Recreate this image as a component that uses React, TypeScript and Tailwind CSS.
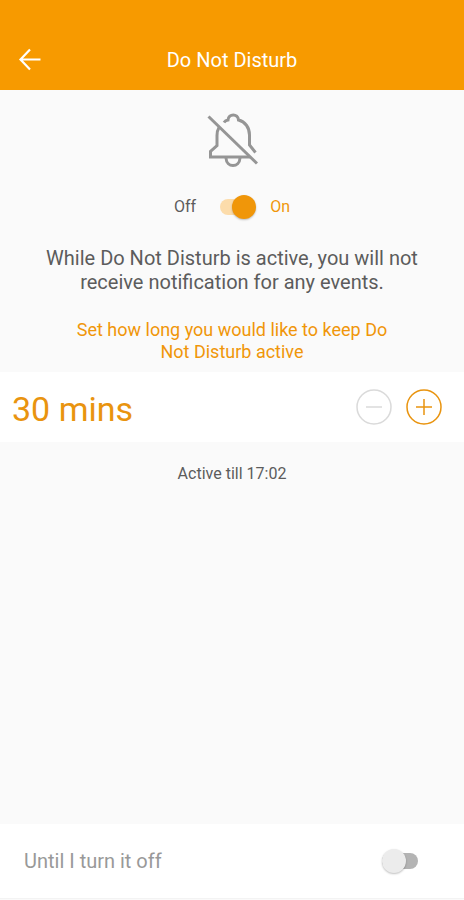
import React, { useState } from "react";

type SwitchProps = {
  id: string;
  checked: boolean;
  onChange: (checked: boolean) => void;
};

function Switch({ id, checked, onChange }: SwitchProps) {
  return (
    <span className="relative inline-flex h-6 w-9 shrink-0 items-center">
      <input
        id={id}
        type="checkbox"
        role="switch"
        checked={checked}
        onChange={(e) => onChange(e.target.checked)}
        className="peer h-4 w-9 cursor-pointer appearance-none rounded-full bg-[#b4b4b4] checked:bg-[#fcdcab]"
      />
      <span className="pointer-events-none absolute left-0 top-0 size-6 rounded-full bg-[#ececec] shadow-[0_1px_2px_rgba(0,0,0,0.25)] peer-checked:left-3 peer-checked:bg-[#f09609]" />
    </span>
  );
}

function BellOff() {
  return (
    <svg
      className="h-14 w-[52px]"
      viewBox="0 0 52 56"
      fill="none"
      stroke="#959595"
      strokeWidth="3"
      aria-hidden="true"
    >
      <path d="M18 10.500 C19 9 20.500 8.200 22 8 C22.500 1.200 32 1.200 32.500 8 C39 9.500 43.500 15.500 43.500 23 V33 L49.500 40.500" />
      <path d="M13 15.500 C11.500 18 11 20.500 11 23.500 V33.500 L4.500 39.500 V45 H44" />
      <path d="M20 46 C20.500 56 33.500 56 34 46" />
      <path d="M2.500 4.500 L51 51.500" />
    </svg>
  );
}

export default function App() {
  const [enabled, setEnabled] = useState(true);
  const [untilOff, setUntilOff] = useState(false);
  const [minutes, setMinutes] = useState(30);
  const end = 16 * 60 + 32 + minutes;
  const till = `${Math.floor(end / 60) % 24}:${String(end % 60).padStart(2, "0")}`;

  return (
    <div className="flex min-h-screen flex-col bg-[#fafafa] font-[Roboto,'Liberation_Sans',sans-serif] text-[#5c5c5c]">
      <header className="grid grid-cols-[60px_1fr_60px] items-center bg-[#f79a00] pt-[30px] text-white">
        <button type="button" aria-label="Back" className="flex h-[60px] items-center pl-[18px]">
          <svg className="size-6" viewBox="0 0 24 24" fill="none" stroke="currentColor" strokeWidth="2.200" aria-hidden="true">
            <path d="M22.500 11.500 H3 M12 1.500 L2.500 11.500 L12 21.500" />
          </svg>
        </button>
        <h1 className="text-center text-xl">Do Not Disturb</h1>
      </header>

      <main className="flex grow flex-col">
        <section className="flex flex-col items-center px-10 pt-[22px] text-center">
          <BellOff />
          <div className="mt-[27px] flex items-center gap-[14px] text-base leading-6">
            <span className="mr-[10px]">Off</span>
            <Switch id="dnd" checked={enabled} onChange={setEnabled} />
            <label htmlFor="dnd" className="text-[#f09609]">On</label>
          </div>
          <p className="mt-[27px] text-xl leading-6">
            While Do Not Disturb is active, you will not receive notification for any events.
          </p>
          <p className="mt-[25px] max-w-[330px] text-lg leading-[22px] text-[#f09609]">
            Set how long you would like to keep Do Not Disturb active
          </p>
        </section>

        <section className="mt-[9px] flex h-[70px] items-center bg-white pl-3 pr-[22px]">
          <output className="grow pt-1 text-[34px] leading-10 text-[#e9940f]">{minutes} mins</output>
          <button
            type="button"
            aria-label="Decrease time"
            disabled={minutes <= 30}
            onClick={() => setMinutes(minutes - 30)}
            className="mr-[14px] text-[#e9940f] disabled:text-[#dadada]"
          >
            <svg className="size-9" viewBox="0 0 36 36" fill="none" stroke="currentColor" strokeWidth="1.500" aria-hidden="true">
              <circle cx="18" cy="18" r="17" />
              <path d="M10 18 H26" />
            </svg>
          </button>
          <button
            type="button"
            aria-label="Increase time"
            onClick={() => setMinutes(minutes + 30)}
            className="text-[#e9940f]"
          >
            <svg className="size-9" viewBox="0 0 36 36" fill="none" stroke="currentColor" strokeWidth="1.500" aria-hidden="true">
              <circle cx="18" cy="18" r="17" />
              <path d="M10 18 H26 M18 10 V26" />
            </svg>
          </button>
        </section>

        <p className="mt-5 text-center text-base leading-6">Active till {till}</p>
      </main>

      <footer className="mb-px flex h-[75px] items-center justify-between border-b border-[#f3f3f3] bg-white pl-6 pr-[46px]">
        <label htmlFor="until-off" className="text-xl text-[#999999]">Until I turn it off</label>
        <Switch id="until-off" checked={untilOff} onChange={setUntilOff} />
      </footer>
    </div>
  );
}
